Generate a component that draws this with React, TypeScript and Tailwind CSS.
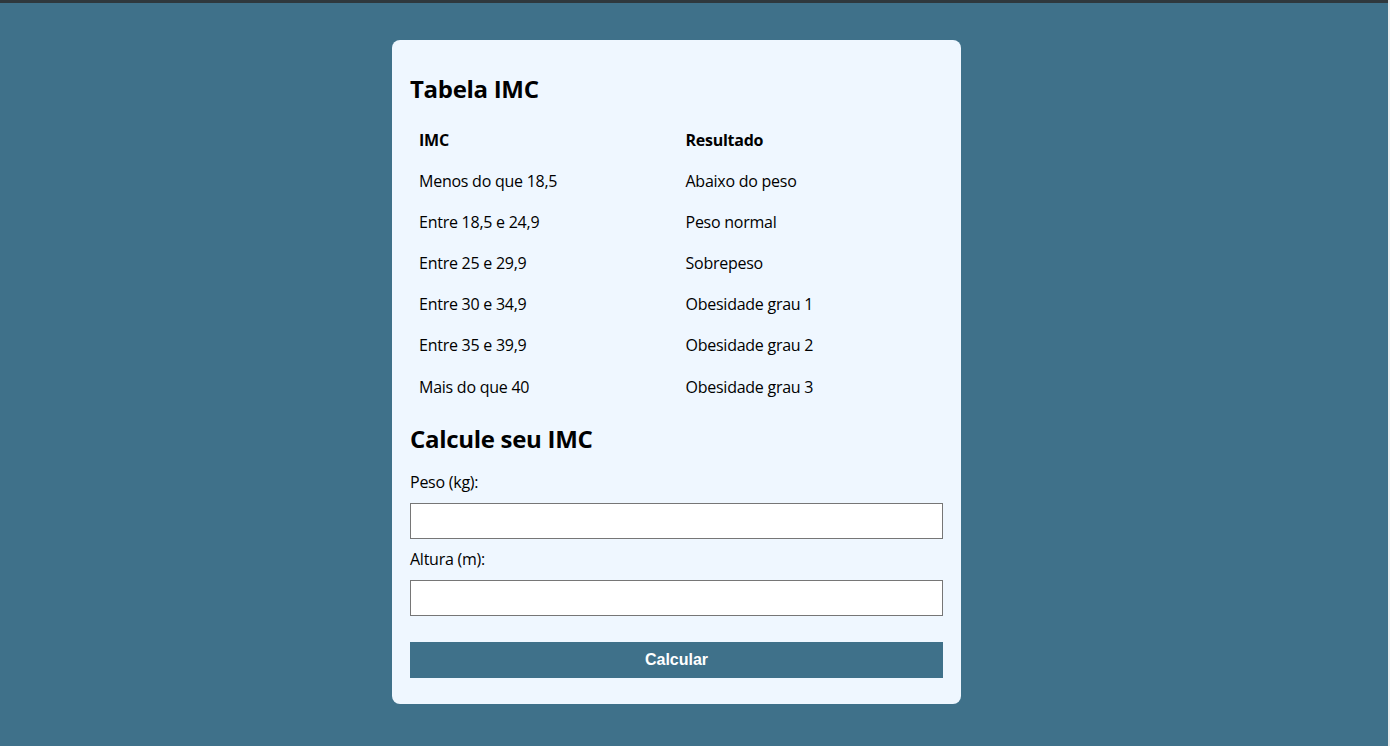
import React from "react";

const rows: [string, string][] = [
  ["Menos do que 18,5", "Abaixo do peso"],
  ["Entre 18,5 e 24,9", "Peso normal"],
  ["Entre 25 e 29,9", "Sobrepeso"],
  ["Entre 30 e 34,9", "Obesidade grau 1"],
  ["Entre 35 e 39,9", "Obesidade grau 2"],
  ["Mais do que 40", "Obesidade grau 3"],
];

export default function App() {
  return (
    <div className="min-h-screen border-r-2 border-[#ececec] flex">
      <div
        className="flex-1 min-h-screen bg-[#3f718a] border-t-[3px] border-[#2f383d] flex justify-center pr-[35px]"
        style={{ fontFamily: '"Open Sans", "Liberation Sans", sans-serif' }}
      >
        <div className="mt-[37px] mb-[42px] w-[569px] bg-[#eff7ff] rounded-[8px] px-[18px] pt-[32px] pb-[26px] text-black self-start">
          <h2 className="text-[24px] leading-[33px] font-bold tracking-[-0.3px]">Tabela IMC</h2>
          <div className="mt-[14px] tracking-[-0.25px]">
            <div className="grid grid-cols-2 h-[41px] items-center font-bold text-[16px]">
              <div className="pl-[9px]">IMC</div>
              <div className="pl-[9px]">Resultado</div>
            </div>
            {rows.map(([a, b]) => (
              <div key={a} className="grid grid-cols-2 h-[41.2px] items-center text-[16px]">
                <div className="pl-[9px]">{a}</div>
                <div className="pl-[9px]">{b}</div>
              </div>
            ))}
          </div>
          <h2 className="mt-[15px] text-[24px] leading-[33px] font-bold tracking-[-0.3px]">Calcule seu IMC</h2>
          <label className="block mt-[15px] text-[16px] leading-[24px] tracking-[-0.25px]">Peso (kg):</label>
          <input className="block mt-[9px] w-full h-[36px] bg-white border border-[#767676]" />
          <label className="block mt-[8px] text-[16px] leading-[24px] tracking-[-0.25px]">Altura (m):</label>
          <input className="block mt-[9px] w-full h-[36px] bg-white border border-[#767676]" />
          <button
            className="block mt-[26px] w-full h-[36px] bg-[#3f718a] text-white font-bold text-[16px]"
            style={{ fontFamily: '"Liberation Sans", Arial, sans-serif' }}
          >
            Calcular
          </button>
        </div>
      </div>
    </div>
  );
}
